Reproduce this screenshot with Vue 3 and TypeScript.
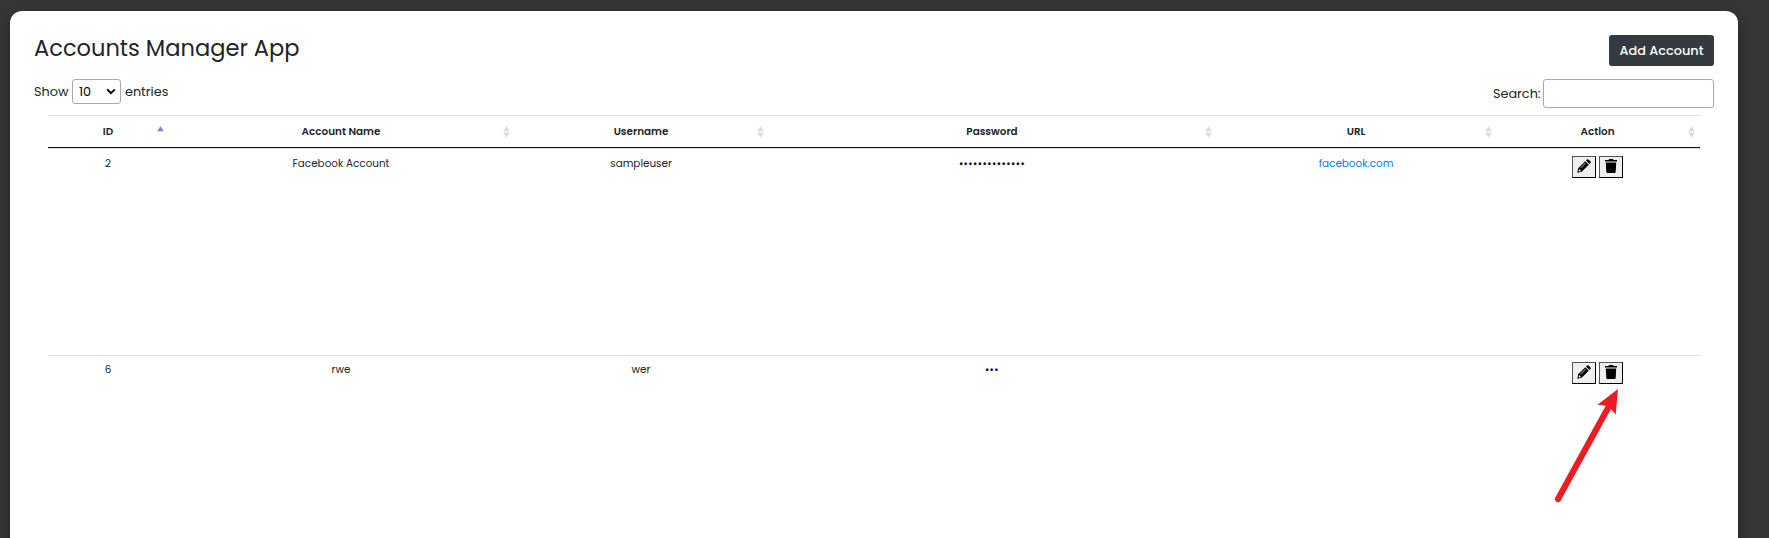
<script setup lang="ts">
interface Column { label: string; sorted?: boolean }
interface Account { id: number; name: string; user: string; password: string; url: string }

const columns: Column[] = [
  { label: 'ID', sorted: true },
  { label: 'Account Name' },
  { label: 'Username' },
  { label: 'Password' },
  { label: 'URL' },
  { label: 'Action' },
]
const accounts: Account[] = [
  { id: 2, name: 'Facebook Account', user: 'sampleuser', password: '••••••••••••••', url: 'facebook.com' },
  { id: 6, name: 'rwe', user: 'wer', password: '•••', url: '' },
]
</script>

<template>
  <div class="page">
    <main class="card">
      <header class="top">
        <h1>Accounts Manager App</h1>
        <button class="add"><span>Add Account</span></button>
      </header>
      <div class="tools">
        <div class="length">
          <span class="show">Show</span>
          <div class="select">
            <span>10</span>
            <svg width="10" height="7" viewBox="0 0 10 7"><path d="M1.2 1.4 5 5.1 8.8 1.4" fill="none" stroke="#000" stroke-width="2" /></svg>
          </div>
          <span class="entries">entries</span>
        </div>
        <label class="search"><span>Search:</span><input type="text" /></label>
      </div>
      <section class="table">
        <div class="row head">
          <div v-for="c in columns" :key="c.label" class="cell">
            <span>{{ c.label }}</span>
            <svg class="sort" width="7" height="12" viewBox="0 0 7 12">
              <path d="M3.5 0 6.7 5.3H.3Z" :fill="c.sorted ? '#8080e0' : '#dcdcdc'" />
              <path v-if="!c.sorted" d="M.3 6.5h6.4L3.5 11.8Z" fill="#dcdcdc" />
            </svg>
          </div>
        </div>
        <div v-for="a in accounts" :key="a.id" class="row body">
          <div class="cell">{{ a.id }}</div>
          <div class="cell">{{ a.name }}</div>
          <div class="cell">{{ a.user }}</div>
          <div class="cell"><span class="dots">{{ a.password }}</span></div>
          <div class="cell"><a v-if="a.url">{{ a.url }}</a></div>
          <div class="cell actions">
            <button class="icon">
              <svg width="14" height="14" viewBox="0 0 14 14">
                <path d="M.3 13.7 1.2 9.3 8.3 2.2 11.8 5.7 4.7 12.8Z M9 1.5 9.9.6Q10.8-.2 11.8.7L13.3 2.2Q14.2 3.2 13.4 4.1L12.5 5Z" />
                <path d="M2.1 9.9 4.1 11.9 2.1 12.4 1.6 11.9Z" fill="#efefef" />
                <path d="M3.8 8.8 8.4 4.2" stroke="#efefef" stroke-width=".8" />
              </svg>
            </button>
            <button class="icon">
              <svg width="12" height="14" viewBox="0 0 12 14">
                <path d="M0 .9H3.5L4 0H8L8.5 .9H12V2.5H0Z M.8 3.4H11.2L10.7 12.7Q10.6 13.9 9.5 13.9H2.5Q1.4 13.9 1.3 12.7Z" />
              </svg>
            </button>
          </div>
        </div>
      </section>
    </main>
    <svg class="arrow" width="66" height="118" viewBox="0 0 66 118">
      <path d="M4 110 54 19" fill="none" stroke="#ed1c24" stroke-width="6.2" stroke-linecap="round" />
      <path d="M64 0 43.5 15.8 51.5 16.8 56.5 19.5 61.7 25.5Z" fill="#ed1c24" />
    </svg>
  </div>
</template>

<style>
body { overflow: hidden; }
</style>

<style scoped>
* { box-sizing: border-box; }
.page {
  position: relative; height: 538px; overflow: hidden; padding: 11px 31px 0 10px; background: #363636;
  font-family: Poppins, Inter, "Open Sans", sans-serif; color: #212529;
}
.card { height: 700px; padding: 24px 24px 0; background: #fff; border-radius: 12px; box-shadow: 0 5px 15px rgba(0, 0, 0, .35); }
.top { display: flex; justify-content: space-between; height: 44px; }
h1 { margin: 0; font-size: 22.55px; line-height: 27px; font-weight: 400; white-space: nowrap; }
.add {
  width: 105px; height: 31px; padding: 0; border: 0; border-radius: 3px; background: #343a40; color: #fff;
  font: 500 12.9px/31px Poppins, Inter, sans-serif; white-space: nowrap;
}
.tools { display: flex; justify-content: space-between; height: 36px; font-size: 12.8px; }
.length { display: flex; height: 25px; line-height: 25px; }
.show { width: 38px; }
.select {
  display: flex; align-items: center; justify-content: space-between; width: 49px; height: 25px; padding: 0 4px 0 6px;
  border: 1px solid #aaa; border-radius: 3px; color: #000;
}
.entries { margin-left: 4px; }
.search { display: flex; height: 29px; line-height: 29px; }
.search span { width: 50px; }
.search input { width: 171px; height: 29px; border: 1px solid #aaa; border-radius: 3px; background: #fff; }
.table { margin: 0 14px; font-size: 10.4px; }
.row { display: grid; grid-template-columns: 120px 346px 254px 448px 280px 203px; border-top: 1px solid #dee2e6; }
.cell { position: relative; text-align: center; line-height: 16px; white-space: nowrap; }
.head { height: 33px; border-bottom: 1px solid #111; font-weight: 600; }
.head .cell { padding-top: 8px; }
.sort { position: absolute; right: 4px; top: 10px; }
.body { height: 207px; padding-top: 7px; }
.body + .body { padding-top: 6px; }
.dots { color: #000; font-size: 10.4px; letter-spacing: .45px; }
a { color: #007bff; }
.actions { display: flex; justify-content: center; gap: 3px; }
.icon {
  display: flex; justify-content: center; width: 24px; height: 22px; padding: 2px 0 0; background: #efefef;
  border: 1px solid #000; border-top-color: #555; border-left-color: #555;
}
.arrow { position: absolute; left: 1554px; top: 389px; }
</style>
